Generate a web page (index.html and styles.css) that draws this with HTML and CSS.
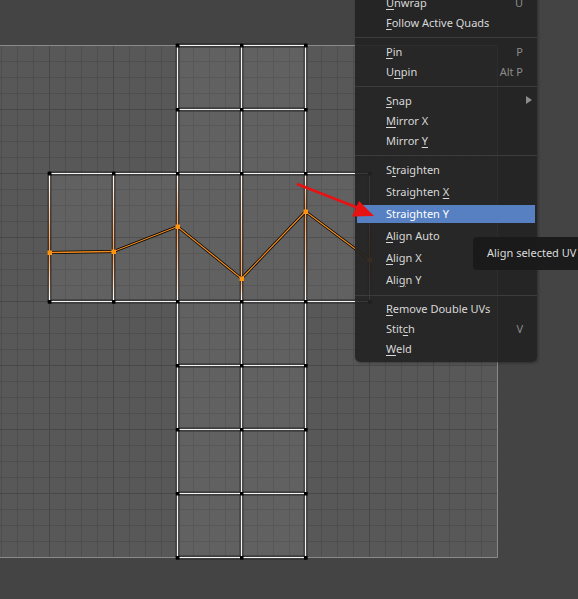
FILE: index.html
```html
<!DOCTYPE html>
<html>
<head>
<meta charset="utf-8">
<link rel="stylesheet" href="styles.css">
</head>
<body>
<div class="stage">
  <svg class="canvas" width="578" height="599" viewBox="0 0 578 599" xmlns="http://www.w3.org/2000/svg">
    <defs>
      <pattern id="fine" patternUnits="userSpaceOnUse" x="1" y="45" width="16" height="16">
        <rect width="16" height="16" fill="#585858"/>
        <path d="M0.5 0V16M0 0.5H16" stroke="#4e4e4e" stroke-width="1" fill="none"/>
      </pattern>
      <pattern id="major" patternUnits="userSpaceOnUse" x="49" y="45" width="64" height="64">
        <path d="M0.5 0V64M0 0.5H64" stroke="#474747" stroke-width="1" fill="none"/>
      </pattern>
      <linearGradient id="a1" gradientUnits="userSpaceOnUse" x1="0" y1="173" x2="0" y2="252"><stop offset="0" stop-color="#fff"/><stop offset="1" stop-color="#f2a060"/></linearGradient>
      <linearGradient id="a2" gradientUnits="userSpaceOnUse" x1="0" y1="252" x2="0" y2="301"><stop offset="0" stop-color="#f2a060"/><stop offset="1" stop-color="#fff"/></linearGradient>
      <linearGradient id="b1" gradientUnits="userSpaceOnUse" x1="0" y1="173" x2="0" y2="251"><stop offset="0" stop-color="#fff"/><stop offset="1" stop-color="#f2a060"/></linearGradient>
      <linearGradient id="b2" gradientUnits="userSpaceOnUse" x1="0" y1="251" x2="0" y2="301"><stop offset="0" stop-color="#f2a060"/><stop offset="1" stop-color="#fff"/></linearGradient>
      <linearGradient id="c1" gradientUnits="userSpaceOnUse" x1="0" y1="173" x2="0" y2="226"><stop offset="0" stop-color="#fff"/><stop offset="1" stop-color="#f2a060"/></linearGradient>
      <linearGradient id="c2" gradientUnits="userSpaceOnUse" x1="0" y1="226" x2="0" y2="301"><stop offset="0" stop-color="#f2a060"/><stop offset="1" stop-color="#fff"/></linearGradient>
      <linearGradient id="d1" gradientUnits="userSpaceOnUse" x1="0" y1="173" x2="0" y2="278"><stop offset="0" stop-color="#fff"/><stop offset="1" stop-color="#f2a060"/></linearGradient>
      <linearGradient id="d2" gradientUnits="userSpaceOnUse" x1="0" y1="278" x2="0" y2="301"><stop offset="0" stop-color="#f2a060"/><stop offset="1" stop-color="#fff"/></linearGradient>
      <linearGradient id="e1" gradientUnits="userSpaceOnUse" x1="0" y1="173" x2="0" y2="211"><stop offset="0" stop-color="#fff"/><stop offset="1" stop-color="#f2a060"/></linearGradient>
      <linearGradient id="e2" gradientUnits="userSpaceOnUse" x1="0" y1="211" x2="0" y2="301"><stop offset="0" stop-color="#f2a060"/><stop offset="1" stop-color="#fff"/></linearGradient>
      <linearGradient id="f1" gradientUnits="userSpaceOnUse" x1="0" y1="173" x2="0" y2="259"><stop offset="0" stop-color="#fff"/><stop offset="1" stop-color="#f2a060"/></linearGradient>
      <linearGradient id="f2" gradientUnits="userSpaceOnUse" x1="0" y1="259" x2="0" y2="301"><stop offset="0" stop-color="#f2a060"/><stop offset="1" stop-color="#fff"/></linearGradient>
    </defs>

    <!-- UV image area -->
    <rect x="-2" y="45" width="499.5" height="512.5" fill="url(#fine)"/>
    <rect x="-2" y="45" width="499.5" height="512.5" fill="url(#major)"/>
    <path d="M-2 45.5H497.5V557.5H-2" fill="none" stroke="#8a8a8a" stroke-width="1"/>

    <!-- mesh faces -->
    <path d="M177.5 45.5H305.5V173.5H369.5V301.5H305.5V557.5H177.5V301.5H49.5V173.5H177.5Z" fill="#ffffff" fill-opacity="0.06"/>

    <!-- mesh edges: outline -->
    <g stroke="#000" stroke-width="3.4" fill="none" stroke-linecap="square">
      <path d="M177.5 45.5H305.5M177.5 109.5H305.5M49.5 173.5H369.5M49.5 301.5H369.5M177.5 365.5H305.5M177.5 429.5H305.5M177.5 493.5H305.5M177.5 557.5H305.5"/>
      <path d="M177.5 45.5V557.5M241.5 45.5V557.5M305.5 45.5V557.5M49.5 173.5V301.5M113.5 173.5V301.5M369.5 173.5V301.5"/>
    </g>
    <!-- mesh edges: white core -->
    <g stroke="#f4f4f4" stroke-width="1.6" fill="none">
      <path d="M177.5 45.5H305.5M177.5 109.5H305.5M49.5 173.5H369.5M49.5 301.5H369.5M177.5 365.5H305.5M177.5 429.5H305.5M177.5 493.5H305.5M177.5 557.5H305.5"/>
      <path d="M177.5 45.5V173.5M241.5 45.5V173.5M305.5 45.5V173.5M177.5 301.5V557.5M241.5 301.5V557.5M305.5 301.5V557.5"/>
    </g>
    <!-- vertical edges touching selected loop -->
    <g stroke-width="1.6" fill="none">
      <line x1="49.5" y1="173.5" x2="49.5" y2="252.5" stroke="url(#a1)"/>
      <line x1="49.5" y1="252.5" x2="49.5" y2="301.5" stroke="url(#a2)"/>
      <line x1="113.5" y1="173.5" x2="113.5" y2="251.5" stroke="url(#b1)"/>
      <line x1="113.5" y1="251.5" x2="113.5" y2="301.5" stroke="url(#b2)"/>
      <line x1="177.5" y1="173.5" x2="177.5" y2="226.5" stroke="url(#c1)"/>
      <line x1="177.5" y1="226.5" x2="177.5" y2="301.5" stroke="url(#c2)"/>
      <line x1="241.5" y1="173.5" x2="241.5" y2="278.5" stroke="url(#d1)"/>
      <line x1="241.5" y1="278.5" x2="241.5" y2="301.5" stroke="url(#d2)"/>
      <line x1="305.5" y1="173.5" x2="305.5" y2="211.5" stroke="url(#e1)"/>
      <line x1="305.5" y1="211.5" x2="305.5" y2="301.5" stroke="url(#e2)"/>
      <line x1="369.5" y1="173.5" x2="369.5" y2="259.5" stroke="url(#f1)"/>
      <line x1="369.5" y1="259.5" x2="369.5" y2="301.5" stroke="url(#f2)"/>
    </g>

    <!-- corner vertices -->
    <g fill="#000">
      <rect x="176" y="44" width="3.5" height="3.5"/><rect x="240" y="44" width="3.5" height="3.5"/><rect x="304" y="44" width="3.5" height="3.5"/>
      <rect x="176" y="108" width="3.5" height="3.5"/><rect x="240" y="108" width="3.5" height="3.5"/><rect x="304" y="108" width="3.5" height="3.5"/>
      <rect x="48" y="172" width="3.5" height="3.5"/><rect x="112" y="172" width="3.5" height="3.5"/><rect x="176" y="172" width="3.5" height="3.5"/><rect x="240" y="172" width="3.5" height="3.5"/><rect x="304" y="172" width="3.5" height="3.5"/><rect x="368" y="172" width="3.5" height="3.5"/>
      <rect x="48" y="300" width="3.5" height="3.5"/><rect x="112" y="300" width="3.5" height="3.5"/><rect x="176" y="300" width="3.5" height="3.5"/><rect x="240" y="300" width="3.5" height="3.5"/><rect x="304" y="300" width="3.5" height="3.5"/><rect x="368" y="300" width="3.5" height="3.5"/>
      <rect x="176" y="364" width="3.5" height="3.5"/><rect x="240" y="364" width="3.5" height="3.5"/><rect x="304" y="364" width="3.5" height="3.5"/>
      <rect x="176" y="428" width="3.5" height="3.5"/><rect x="240" y="428" width="3.5" height="3.5"/><rect x="304" y="428" width="3.5" height="3.5"/>
      <rect x="176" y="492" width="3.5" height="3.5"/><rect x="240" y="492" width="3.5" height="3.5"/><rect x="304" y="492" width="3.5" height="3.5"/>
      <rect x="176" y="556" width="3.5" height="3.5"/><rect x="240" y="556" width="3.5" height="3.5"/><rect x="304" y="556" width="3.5" height="3.5"/>
    </g>

    <!-- selected loop -->
    <polyline points="49.5,252.5 113.5,251.5 177.5,226.5 241.5,278.5 305.5,211.5 369.5,259.5" fill="none" stroke="#000" stroke-width="2.8" stroke-linejoin="round"/>
    <polyline points="49.5,252.5 113.5,251.5 177.5,226.5 241.5,278.5 305.5,211.5 369.5,259.5" fill="none" stroke="#f08a1e" stroke-width="1.3" stroke-linejoin="round"/>
    <g fill="#ff9410">
      <rect x="47.5" y="250.5" width="4.5" height="4.5"/>
      <rect x="111.5" y="249.5" width="4.5" height="4.5"/>
      <rect x="175.5" y="224.5" width="4.5" height="4.5"/>
      <rect x="239.5" y="276.5" width="4.5" height="4.5"/>
      <rect x="303.5" y="209.5" width="4.5" height="4.5"/>
      <rect x="367.5" y="257.5" width="4.5" height="4.5"/>
    </g>
  </svg>

  <div class="menu">
    <div class="row"><span><span class="u">U</span>nwrap</span><span class="key">U</span></div>
    <div class="row"><span><span class="u">F</span>ollow Active Quads</span></div>
    <div class="sep"></div>
    <div class="row"><span><span class="u">P</span>in</span><span class="key">P</span></div>
    <div class="row"><span>U<span class="u">n</span>pin</span><span class="key">Alt P</span></div>
    <div class="sep"></div>
    <div class="row sub"><span><span class="u">S</span>nap</span><span class="tri"></span></div>
    <div class="row"><span><span class="u">M</span>irror X</span></div>
    <div class="row"><span>Mirror <span class="u">Y</span></span></div>
    <div class="sep"></div>
    <div class="row first-tall"><span>S<span class="u">t</span>raighten</span></div>
    <div class="row tall"><span>Straighten <span class="u">X</span></span></div>
    <div class="row tall active"><span class="hl">Strai<span class="u">g</span>hten Y</span></div>
    <div class="row tall"><span><span class="u">A</span>lign Auto</span></div>
    <div class="row tall"><span><span class="u">A</span>lign X</span></div>
    <div class="row tall"><span>Ali<span class="u">g</span>n Y</span></div>
    <div class="sep short"></div>
    <div class="row"><span><span class="u">R</span>emove Double UVs</span></div>
    <div class="row"><span>Stit<span class="u">c</span>h</span><span class="key">V</span></div>
    <div class="row"><span><span class="u">W</span>eld</span></div>
  </div>

  <div class="tooltip">Align selected UV</div>

  <svg class="arrow" width="578" height="599" viewBox="0 0 578 599" xmlns="http://www.w3.org/2000/svg">
    <line x1="297" y1="184" x2="357" y2="207.5" stroke="#e81212" stroke-width="2.6"/>
    <polygon points="359,201 352,216.5 374,216" fill="#e81212"/>
  </svg>
</div>
</body>
</html>
```
FILE: styles.css
```css
html, body {
  margin: 0;
  padding: 0;
  background: #444444;
  overflow: hidden;
}

.stage {
  position: relative;
  width: 578px;
  height: 599px;
  overflow: hidden;
  font-family: "Noto Sans", "Open Sans", "DejaVu Sans", sans-serif;
  font-size: 11px;
}

.canvas {
  display: block;
}

.menu {
  position: absolute;
  left: 355px;
  top: -7px;
  width: 182px;
  padding-bottom: 3px;
  display: flex;
  flex-direction: column;
  background: rgba(34, 34, 34, 0.9);
  border-radius: 0 0 5px 5px;
  box-shadow: 1px 1px 3px rgba(0, 0, 0, 0.35);
  color: #d8d8d8;
}

.row {
  box-sizing: border-box;
  height: 20px;
  display: flex;
  align-items: center;
  justify-content: space-between;
  padding: 0 14px 2px 31px;
  white-space: nowrap;
}

.row.first-tall {
  height: 21px;
}

.row.tall {
  height: 22px;
}

.row.active {
  margin: 2px;
  height: 18px;
  padding-left: 29px;
  padding-right: 12px;
  background: #5680c2;
  color: #ffffff;
}

.key {
  color: #8c8c8c;
}

.row.sub {
  padding-right: 5px;
}

.tri {
  width: 0;
  height: 0;
  border-top: 4px solid transparent;
  border-bottom: 4px solid transparent;
  border-left: 6px solid #8c8c8c;
}

.u {
  text-decoration: underline;
  text-decoration-thickness: 1px;
  text-underline-offset: 2px;
}

.sep {
  height: 9px;
  display: flex;
  align-items: center;
}

.sep::before {
  content: "";
  display: block;
  width: 100%;
  height: 1px;
  background: #3c3c3c;
}

.sep.short {
  height: 8px;
}

.tooltip {
  position: absolute;
  left: 473px;
  top: 237px;
  width: 130px;
  height: 33px;
  line-height: 32px;
  padding-left: 14px;
  box-sizing: border-box;
  background: rgba(26, 26, 26, 0.96);
  border-radius: 4px;
  color: #dcdcdc;
  white-space: nowrap;
}

.arrow {
  position: absolute;
  left: 0;
  top: 0;
  pointer-events: none;
}
```
